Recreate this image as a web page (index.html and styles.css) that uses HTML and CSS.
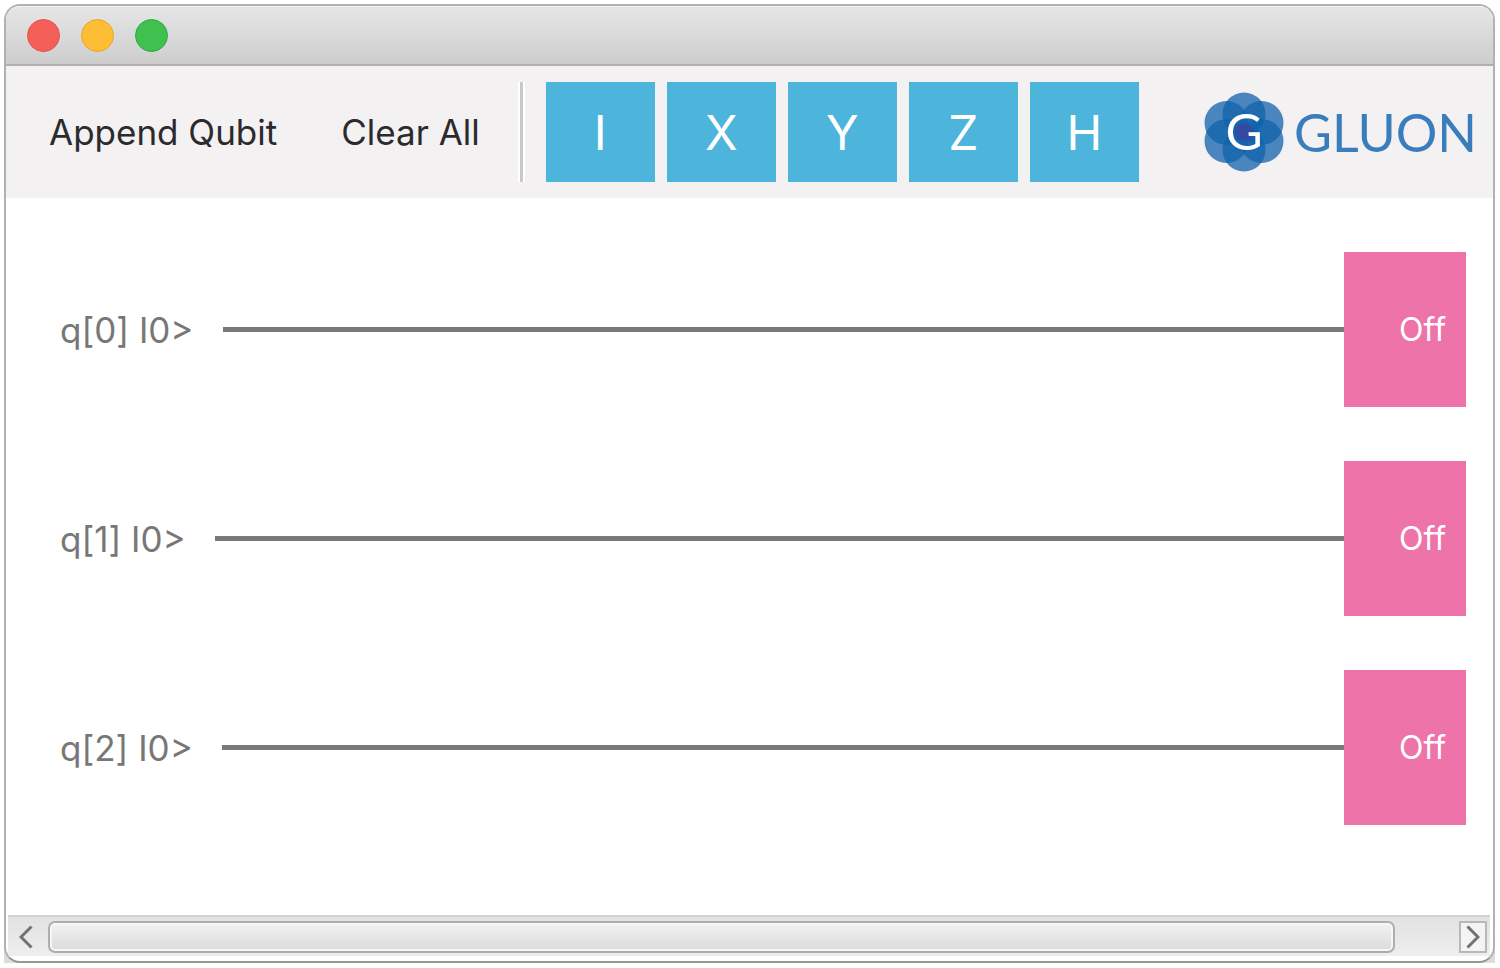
FILE: index.html
```html
<!DOCTYPE html>
<html lang="en">
<head>
  <meta charset="UTF-8">
  <title>Qubit Circuit</title>
  <link rel="stylesheet" href="styles.css">
</head>
<body>
  <div class="frame">
    <div class="window">
      <header class="titlebar">
        <button class="light close" aria-label="Close"></button>
        <button class="light minimize" aria-label="Minimize"></button>
        <button class="light maximize" aria-label="Maximize"></button>
      </header>

      <div class="toolbar">
        <button class="action">Append Qubit</button>
        <button class="action">Clear All</button>
        <div class="separator"></div>
        <div class="gates">
          <button class="gate">I</button>
          <button class="gate">X</button>
          <button class="gate">Y</button>
          <button class="gate">Z</button>
          <button class="gate">H</button>
        </div>
        <div class="logo">
          <svg width="80" height="80" viewBox="-40 -40 80 80">
            <g fill="#1261ab" fill-opacity="0.75">
              <circle cx="0" cy="-18" r="21.5"/>
              <circle cx="17.500" cy="-9" r="22"/>
              <circle cx="17.500" cy="9" r="22"/>
              <circle cx="0" cy="18" r="21.5"/>
              <circle cx="-17.500" cy="9" r="22"/>
              <circle cx="-17.500" cy="-9" r="22"/>
            </g>
            <circle r="9" fill="#4a3a9c" fill-opacity="0.6"/>
            <text class="logo-letter" x="0" y="18" text-anchor="middle">G</text>
          </svg>
          <span class="wordmark">GLUON</span>
        </div>
      </div>

      <main class="circuit">
        <div class="qubit">
          <span class="label">q[0] I0&gt;</span>
          <div class="wire"></div>
          <button class="measure">Off</button>
        </div>
        <div class="qubit">
          <span class="label">q[1] I0&gt;</span>
          <div class="wire"></div>
          <button class="measure">Off</button>
        </div>
        <div class="qubit">
          <span class="label">q[2] I0&gt;</span>
          <div class="wire"></div>
          <button class="measure">Off</button>
        </div>
      </main>

      <div class="scrollbar">
        <button class="arrow" aria-label="Scroll left">
          <svg width="14" height="24" viewBox="0 0 14 24"><path d="M12.500 1.500 L2 12 L12.500 22.500"/></svg>
        </button>
        <div class="track"><div class="thumb"></div></div>
        <button class="arrow boxed" aria-label="Scroll right">
          <svg width="14" height="24" viewBox="0 0 14 24"><path d="M1.500 1.500 L12 12 L1.500 22.500"/></svg>
        </button>
      </div>
    </div>
  </div>
</body>
</html>
```
FILE: styles.css
```css
* { box-sizing: border-box; }
body {
  margin: 0;
  padding: 4px 5px 5px 4px;
  height: 100vh;
  background-color: #fff;
  font-family: Inter, "Liberation Sans", sans-serif;
}
button {
  margin: 0;
  padding: 0;
  border: none;
  background: none;
  font-family: inherit;
  cursor: pointer;
}
svg { display: block; flex: none; }

.frame {
  height: 100%;
  background: linear-gradient(#dcdcdc, #dcdcdc) bottom / 100% 20px no-repeat;
}
.window {
  height: 100%;
  display: flex;
  flex-direction: column;
  border: 2px solid #b0b2b2;
  border-bottom-color: #979797;
  border-radius: 16px;
  background-color: #fff;
  overflow: hidden;
}

.titlebar {
  display: flex;
  align-items: center;
  gap: 21px;
  height: 60px;
  flex: none;
  padding: 0 21px;
  border-top: 1px solid #f2f2f2;
  border-bottom: 2px solid #b0b2b2;
  background: linear-gradient(#e6e6e6, #cdcdcd);
}
.light { width: 33px; height: 33px; border-radius: 50%; }
.close { background-color: #f55f5a; border: 1px solid #e2504c; }
.minimize { background-color: #fdbd34; border: 1px solid #e5a62c; }
.maximize { background-color: #3fc04f; border: 1px solid #2fa83d; }

.toolbar {
  display: flex;
  align-items: center;
  flex: none;
  padding: 16px 16px 16px 11px;
  background-color: #f3f1f2;
}
.action {
  padding: 0 32px;
  font-size: 35px;
  line-height: 100px;
  color: #2b2b2d;
  white-space: nowrap;
}
.separator {
  width: 7px;
  height: 100px;
  margin: 0 21px 0 6px;
  border: solid #fff;
  border-width: 0 2px;
  background-color: #c8c8c8;
}
.gates { display: flex; gap: 12px; }
.gate {
  width: 109px;
  height: 100px;
  background-color: #4db4dc;
  color: #fff;
  font-size: 48px;
}
.logo {
  display: flex;
  align-items: center;
  gap: 10px;
  margin-left: auto;
}
.logo-letter { font-family: Lato, sans-serif; font-size: 51px; fill: #fff; }
.wordmark {
  font-family: Lato, sans-serif;
  font-size: 52px;
  line-height: 60px;
  color: #3a7dbc;
}

.circuit {
  display: flex;
  flex-direction: column;
  gap: 54px;
  flex: 1;
  padding: 54px 27px 0 54px;
}
.qubit { display: flex; align-items: center; }
.label {
  margin-right: 29px;
  font-size: 35px;
  color: #777;
  white-space: nowrap;
}
.wire { flex: 1; height: 5px; background-color: #787a79; }
.measure {
  width: 122px;
  height: 155px;
  padding-right: 20px;
  background-color: #ee73a8;
  color: #fff;
  font-size: 32px;
  text-align: right;
}

.scrollbar {
  display: flex;
  align-items: center;
  flex: none;
  height: 41px;
  margin: 0 3px 5px 2px;
  padding-right: 3px;
  border-top: 2px solid #d2d2d2;
  background: linear-gradient(#e2e2e2, #eee);
}
.arrow {
  display: flex;
  align-items: center;
  justify-content: center;
  width: 36px;
  height: 32px;
}
.arrow path { fill: none; stroke: #727272; stroke-width: 3; }
.boxed {
  width: 28px;
  border: 2px solid #b8b8b8;
  background-color: #f4f4f4;
}
.track { flex: 1; padding: 0 8px 0 4px; }
.thumb {
  width: 96%;
  height: 32px;
  border: 2px solid #aeaeae;
  border-radius: 7px;
  background: linear-gradient(#f2f2f2, #dadada);
  box-shadow: inset 0 0 0 2px #f6f6f6;
}
```
